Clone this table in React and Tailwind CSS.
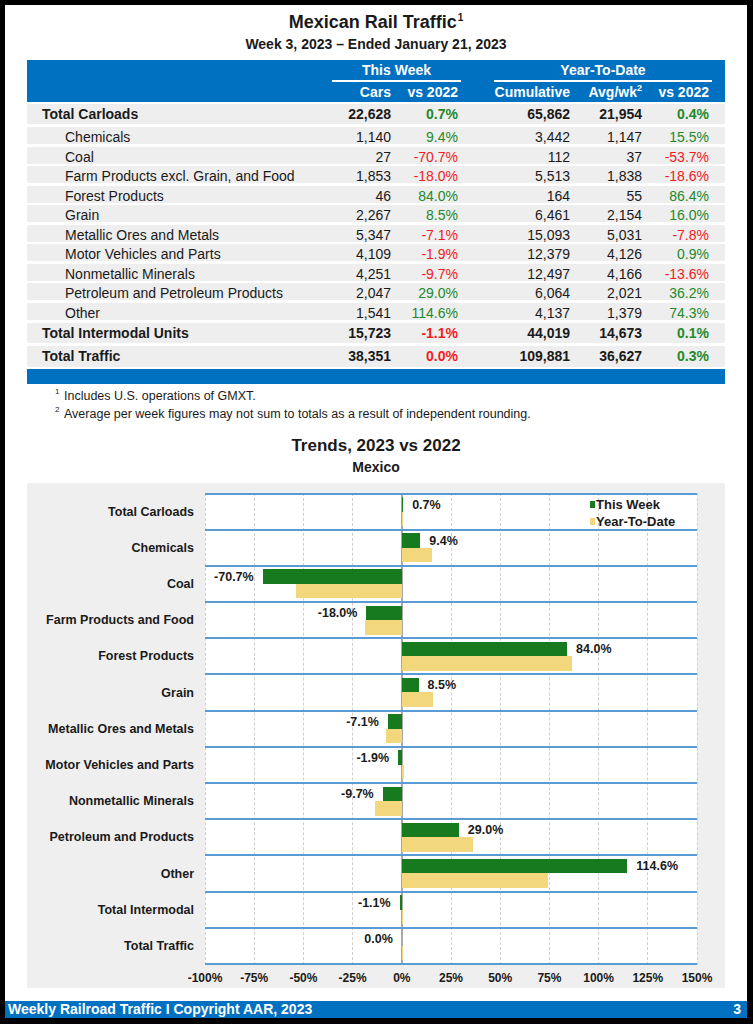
const rows = [
  { label: 'Total Carloads', bold: true, cars: '22,628', tw: '0.7%', cum: '65,862', avg: '21,954', ytd: '0.4%', h: 'h-[20px]', mt: 'mt-[2px]' },
  { label: 'Chemicals', cars: '1,140', tw: '9.4%', cum: '3,442', avg: '1,147', ytd: '15.5%', h: 'h-[17px]', mt: 'mt-[3px]' },
  { label: 'Coal', cars: '27', tw: '-70.7%', cum: '112', avg: '37', ytd: '-53.7%', h: 'h-[17px]', mt: 'mt-[2.5px]' },
  { label: 'Farm Products excl. Grain, and Food', cars: '1,853', tw: '-18.0%', cum: '5,513', avg: '1,838', ytd: '-18.6%', h: 'h-[17px]', mt: 'mt-[2.5px]' },
  { label: 'Forest Products', cars: '46', tw: '84.0%', cum: '164', avg: '55', ytd: '86.4%', h: 'h-[17px]', mt: 'mt-[2.5px]' },
  { label: 'Grain', cars: '2,267', tw: '8.5%', cum: '6,461', avg: '2,154', ytd: '16.0%', h: 'h-[17px]', mt: 'mt-[2.5px]' },
  { label: 'Metallic Ores and Metals', cars: '5,347', tw: '-7.1%', cum: '15,093', avg: '5,031', ytd: '-7.8%', h: 'h-[17px]', mt: 'mt-[2.5px]' },
  { label: 'Motor Vehicles and Parts', cars: '4,109', tw: '-1.9%', cum: '12,379', avg: '4,126', ytd: '0.9%', h: 'h-[17px]', mt: 'mt-[2.5px]' },
  { label: 'Nonmetallic Minerals', cars: '4,251', tw: '-9.7%', cum: '12,497', avg: '4,166', ytd: '-13.6%', h: 'h-[17px]', mt: 'mt-[2.5px]' },
  { label: 'Petroleum and Petroleum Products', cars: '2,047', tw: '29.0%', cum: '6,064', avg: '2,021', ytd: '36.2%', h: 'h-[17px]', mt: 'mt-[2.5px]' },
  { label: 'Other', cars: '1,541', tw: '114.6%', cum: '4,137', avg: '1,379', ytd: '74.3%', h: 'h-[17px]', mt: 'mt-[2.5px]' },
  { label: 'Total Intermodal Units', bold: true, cars: '15,723', tw: '-1.1%', cum: '44,019', avg: '14,673', ytd: '0.1%', h: 'h-[20px]', mt: 'mt-[3px]' },
  { label: 'Total Traffic', bold: true, cars: '38,351', tw: '0.0%', twRed: true, cum: '109,881', avg: '36,627', ytd: '0.3%', h: 'h-[21px]', mt: 'mt-[3px]' },
];

const chart = [
  ['Total Carloads', 0.7, 0.4],
  ['Chemicals', 9.4, 15.5],
  ['Coal', -70.7, -53.7],
  ['Farm Products and Food', -18.0, -18.6],
  ['Forest Products', 84.0, 86.4],
  ['Grain', 8.5, 16.0],
  ['Metallic Ores and Metals', -7.1, -7.8],
  ['Motor Vehicles and Parts', -1.9, 0.9],
  ['Nonmetallic Minerals', -9.7, -13.6],
  ['Petroleum and Products', 29.0, 36.2],
  ['Other', 114.6, 74.3],
  ['Total Intermodal', -1.1, 0.1],
  ['Total Traffic', 0.0, 0.3],
];

const W = 492;
const px = (v) => ((v + 100) / 250) * W;
const X0 = px(0);
const ticks = ['-100%', '-75%', '-50%', '-25%', '0%', '25%', '50%', '75%', '100%', '125%', '150%'];

function pctColor(v, forceRed) {
  if (forceRed || v.startsWith('-')) return 'text-[#f01c24]';
  return 'text-[#23892a]';
}

function Bar({ v, top, color }) {
  const left = v >= 0 ? X0 : px(v);
  return (
    <div
      className={`absolute h-[14.5px] ${color}`}
      style={{ left, width: Math.abs(v) * (W / 250), top }}
    />
  );
}

function ChartRow({ tw, ytd, last, first }) {
  const label = tw.toFixed(1) + '%';
  const pos = tw > 0;
  return (
    <div className={`relative border-t-2 border-[#5b9bd5] ${last ? 'border-b-2 h-[38.2px]' : 'h-[36.2px]'}`}>
      <Bar v={tw} top={2.5} color="bg-[#187a1e]" />
      <Bar v={ytd} top={17} color="bg-[#f3d77c]" />
      <div
        className="absolute top-[3px] text-[12.5px] font-bold leading-[15px] text-[#1a1a1a] whitespace-nowrap"
        style={pos ? { left: px(tw) + 9 } : { right: W - Math.min(px(tw), X0) + 9 }}
      >
        {label}
      </div>
      {first && (
        <div className="absolute left-[385px] top-[1px] text-[13px] font-bold leading-[17px] text-[#1a1a1a]">
          <div className="flex items-center">
            <span className="inline-block w-[5px] h-[7px] bg-[#187a1e] mr-[1px]" />
            This Week
          </div>
          <div className="flex items-center">
            <span className="inline-block w-[5px] h-[7px] bg-[#f3d77c] mr-[1px]" />
            Year-To-Date
          </div>
        </div>
      )}
    </div>
  );
}

export default function App() {
  return (
    <div className="w-[753px] h-[1024px] bg-black pt-[5px] pl-[5px] pr-[6px] pb-[6px] font-['Liberation_Sans',Arial,sans-serif] text-[#1a1a1a]">
      <div className="h-full bg-white flex flex-col">
        <div className="pt-[5px] h-[29px] flex justify-center items-center">
          <h1 className="text-[18px] font-bold leading-[24px]">
            Mexican Rail Traffic<sup className="text-[10px] top-[-7px] ml-[1px]">1</sup>
          </h1>
        </div>
        <div className="h-[20px] text-center text-[14px] font-bold leading-[20px]">
          Week 3, 2023 – Ended January 21, 2023
        </div>

        <div className="mx-[22px] mt-[6px]">
          <div className="bg-[#0070c0] h-[42px] text-white text-[14px] font-bold">
            <div className="grid grid-cols-[300px_64px_67px_112px_72px_67px] h-[20px]">
              <div />
              <div className="col-span-2 ml-[5px] -mr-[3px] flex items-center justify-center">This Week</div>
              <div className="col-span-3 ml-[36px] -mr-[3px] flex items-center justify-center">Year-To-Date</div>
            </div>
            <div className="grid grid-cols-[300px_64px_67px_112px_72px_67px] h-[2px]">
              <div />
              <div className="col-span-2 ml-[5px] -mr-[3px] bg-white" />
              <div className="col-span-3 ml-[36px] -mr-[3px] bg-white" />
            </div>
            <div className="grid grid-cols-[300px_64px_67px_112px_72px_67px] h-[20px] items-center text-right">
              <div />
              <div>Cars</div>
              <div>vs 2022</div>
              <div>Cumulative</div>
              <div>
                Avg/wk<sup className="text-[9px] top-[-6px]">2</sup>
              </div>
              <div>vs 2022</div>
            </div>
          </div>

          {rows.map((r) => (
            <div
              key={r.label}
              className={`grid grid-cols-[300px_64px_67px_112px_72px_67px] items-center bg-[#eeeeee] text-[14px] text-right ${r.h} ${r.mt} ${r.bold ? 'font-bold' : ''}`}
            >
              <div className={`text-left whitespace-nowrap ${r.bold ? 'pl-[15px]' : 'pl-[38px]'}`}>{r.label}</div>
              <div>{r.cars}</div>
              <div className={pctColor(r.tw, r.twRed)}>{r.tw}</div>
              <div>{r.cum}</div>
              <div>{r.avg}</div>
              <div className={pctColor(r.ytd)}>{r.ytd}</div>
            </div>
          ))}
          <div className="bg-[#0070c0] h-[15px] mt-[2px]" />
        </div>

        <div className="mt-[3px] pl-[50px] text-[12.5px] leading-[18px]">
          <div className="flex">
            <sup className="w-[9px] text-[8px] leading-[18px] top-[-4px]">1</sup>
            <span>Includes U.S. operations of GMXT.</span>
          </div>
          <div className="flex">
            <sup className="w-[9px] text-[8px] leading-[18px] top-[-4px]">2</sup>
            <span>Average per week figures may not sum to totals as a result of independent rounding.</span>
          </div>
        </div>

        <div className="mt-[12px] h-[22px] text-center text-[17px] font-bold leading-[22px]">Trends, 2023 vs 2022</div>
        <div className="h-[20px] text-center text-[14px] font-bold leading-[20px]">Mexico</div>

        <div className="mx-[22px] mt-[6px] bg-[#efefef] pt-[10px] flex">
          <div className="w-[178px] pr-[11px] flex flex-col">
            {chart.map(([name]) => (
              <div key={name} className="h-[36.2px] pt-[3px] flex items-center justify-end text-[12.5px] font-bold whitespace-nowrap">
                {name}
              </div>
            ))}
          </div>
          <div className="w-[492px]">
            <div className="relative bg-white">
              {ticks.map((t, i) =>
                i === 4 ? (
                  <div key={t} className="absolute top-0 bottom-0 w-[1.5px] bg-[#a9a9a9]" style={{ left: X0 - 0.75 }} />
                ) : (
                  <div key={t} className="absolute top-0 bottom-0 border-l border-dashed border-[#cfcfcf]" style={{ left: i * (W / 10) - 0.5 }} />
                )
              )}
              {chart.map(([name, tw, ytd], i) => (
                <ChartRow key={name} tw={tw} ytd={ytd} first={i === 0} last={i === chart.length - 1} />
              ))}
            </div>
            <div className="relative h-[23px]">
              {ticks.map((t, i) => (
                <div
                  key={t}
                  className="absolute top-[3px] -translate-x-1/2 text-[12px] font-bold leading-[20px]"
                  style={{ left: i * (W / 10) }}
                >
                  {t}
                </div>
              ))}
            </div>
          </div>
        </div>

        <div className="mt-auto h-[17px] bg-[#0070c0] text-white text-[14px] font-bold flex items-center justify-between pl-[3px] pr-[6px]">
          <span>Weekly Railroad Traffic I Copyright AAR, 2023</span>
          <span>3</span>
        </div>
      </div>
    </div>
  );
}
